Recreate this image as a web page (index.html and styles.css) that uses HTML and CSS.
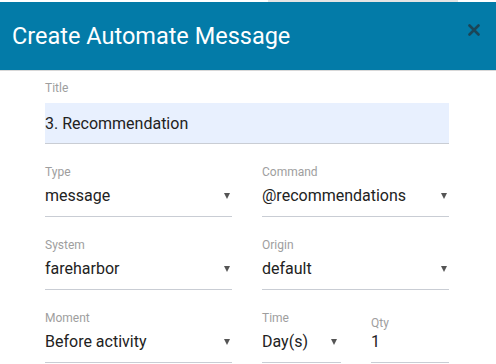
FILE: index.html
```html
<!DOCTYPE html>
<html>
  <head>
    <title>Create Automate Message</title>
    <link rel="stylesheet" href="styles.css">
  </head>

  <body>
    <div class="top-strip"><span class="shade"></span></div>

    <div class="modal-header">
      <h1>Create Automate Message</h1>
      <button class="close-button" aria-label="Close">
        <svg width="12" height="12" viewBox="0 0 12 12">
          <path d="M1.5 1.5 L10.5 10.5 M10.5 1.5 L1.5 10.5" stroke="#1b4557" stroke-width="2.6" stroke-linecap="round" />
        </svg>
      </button>
    </div>

    <div class="modal-body">
      <div class="field">
        <label>Title</label>
        <div class="text-input">3. Recommendation</div>
      </div>

      <div class="form-row">
        <div class="field">
          <label>Type</label>
          <div class="select">message<span class="arrow"></span></div>
        </div>
        <div class="field">
          <label>Command</label>
          <div class="select">@recommendations<span class="arrow"></span></div>
        </div>
      </div>

      <div class="form-row">
        <div class="field">
          <label>System</label>
          <div class="select">fareharbor<span class="arrow"></span></div>
        </div>
        <div class="field">
          <label>Origin</label>
          <div class="select">default<span class="arrow"></span></div>
        </div>
      </div>

      <div class="form-row">
        <div class="field">
          <label>Moment</label>
          <div class="select">Before activity<span class="arrow"></span></div>
        </div>
        <div class="split">
          <div class="field">
            <label>Time</label>
            <div class="select">Day(s)<span class="arrow"></span></div>
          </div>
          <div class="field qty">
            <label>Qty</label>
            <div class="select">1</div>
          </div>
        </div>
      </div>
    </div>
  </body>
</html>
```

FILE: styles.css
```css
body {
  font-family: Roboto, "Liberation Sans", sans-serif;
  margin: 0;
  background: #fff;
}

.top-strip {
  height: 2px;
}

.shade {
  display: block;
  margin-left: 268px;
  width: 190px;
  height: 2px;
  background: #e4e4e4;
}

.modal-header {
  height: 68px;
  background-color: #037ba8;
  border-bottom: 1px solid #d8d8d8;
  display: flex;
  align-items: center;
  justify-content: space-between;
  padding: 0 16px 0 12px;
}

h1 {
  margin: 0;
  font-size: 23.5px;
  font-weight: 400;
  color: #fff;
}

.close-button {
  background: none;
  border: none;
  padding: 0;
  display: flex;
  margin-top: -12px;
}

.modal-body {
  padding: 10px 47px 0 45px;
}

.field {
  display: flex;
  flex-direction: column;
}

label {
  font-size: 12px;
  line-height: 14px;
  color: #9e9e9e;
  margin-bottom: 7px;
}

.text-input {
  margin-top: 1px;
  height: 38px;
  padding-top: 2px;
  line-height: 38px;
  font-size: 16px;
  color: #222;
  background: #e8f0fe;
  border-bottom: 1px solid #c9cdd4;
}

.form-row {
  display: grid;
  grid-template-columns: 187px 187px;
  gap: 30px;
  margin-top: 21px;
}

.select {
  position: relative;
  font-size: 16px;
  line-height: 19px;
  padding-bottom: 11px;
  color: #222;
  border-bottom: 1px solid #c9cdd4;
}

.arrow {
  position: absolute;
  right: 2px;
  top: 7px;
  width: 0;
  height: 0;
  border-left: 3.5px solid transparent;
  border-right: 3.5px solid transparent;
  border-top: 6px solid #555;
}

.split {
  display: grid;
  grid-template-columns: 79px 78px;
  gap: 30px;
}

.split .arrow {
  right: 4px;
}

.qty label {
  padding-top: 5px;
  margin-bottom: 2px;
}
```
